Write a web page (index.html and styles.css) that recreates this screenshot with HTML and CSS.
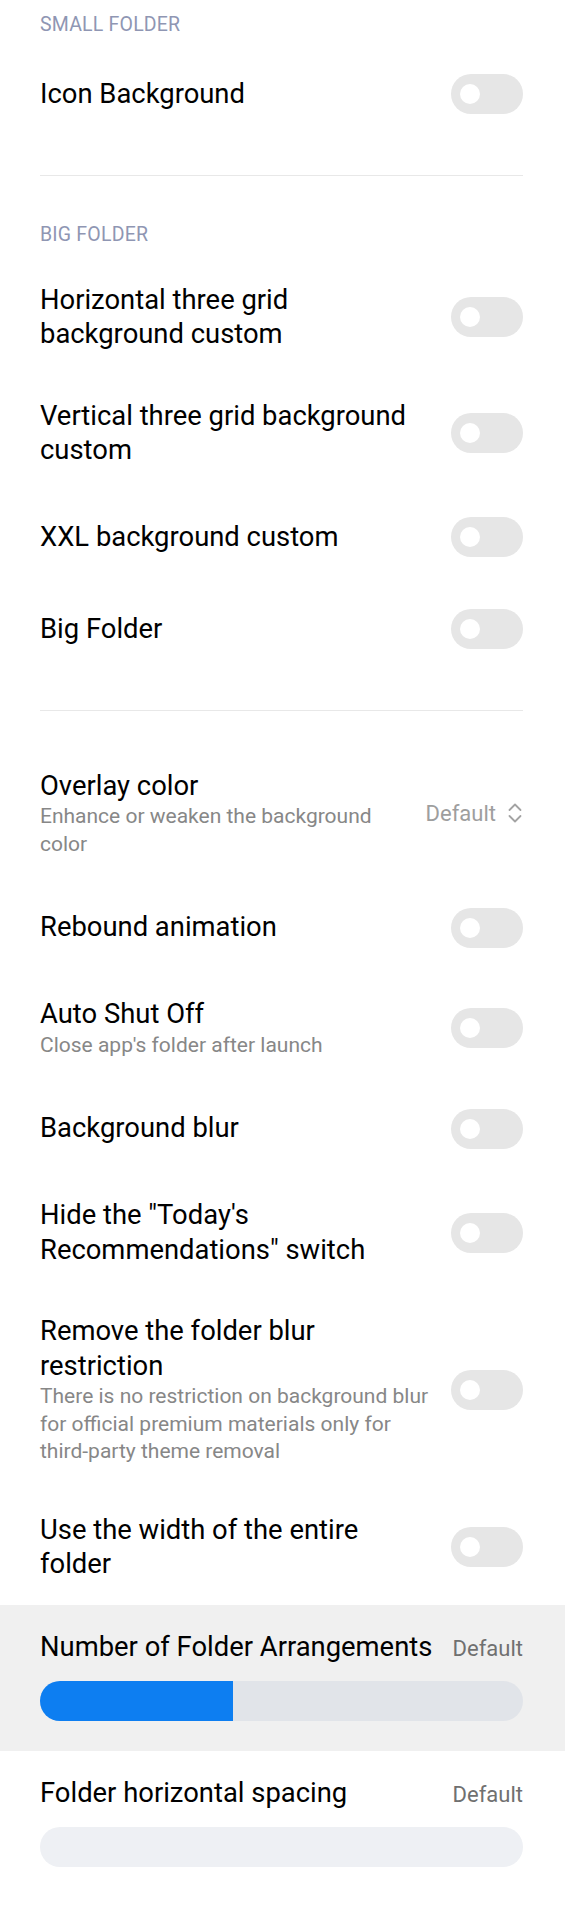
FILE: index.html
```html
<!DOCTYPE html>
<html lang="en">
<head>
   <meta charset="UTF-8">
   <meta name="viewport" content="width=device-width, initial-scale=1.0">
   <title>Folder settings</title>
   <link rel="stylesheet" href="styles.css">
</head>
<body>
   <div class="group">
       <div class="section-title first">SMALL FOLDER</div>
       <div class="row">
           <div class="text"><div class="title">Icon Background</div></div>
           <span class="switch"></span>
       </div>

       <div class="divider"></div>

       <div class="section-title">BIG FOLDER</div>
       <div class="row">
           <div class="text"><div class="title">Horizontal three grid background custom</div></div>
           <span class="switch"></span>
       </div>
       <div class="row">
           <div class="text"><div class="title">Vertical three grid background custom</div></div>
           <span class="switch"></span>
       </div>
       <div class="row">
           <div class="text"><div class="title">XXL background custom</div></div>
           <span class="switch"></span>
       </div>
       <div class="row">
           <div class="text"><div class="title">Big Folder</div></div>
           <span class="switch"></span>
       </div>

       <div class="divider"></div>

       <div class="row spaced">
           <div class="text">
               <div class="title">Overlay color</div>
               <div class="summary">Enhance or weaken the background color</div>
           </div>
           <div class="picker">
               <span>Default</span>
               <svg width="16" height="24" viewBox="0 0 16 24" fill="none" stroke="#a3a3a3" stroke-width="1.8" stroke-linecap="round" stroke-linejoin="round">
                   <path d="M2.5 9 L8 3.5 L13.5 9"/>
                   <path d="M2.5 15 L8 20.5 L13.5 15"/>
               </svg>
           </div>
       </div>
       <div class="row">
           <div class="text"><div class="title">Rebound animation</div></div>
           <span class="switch"></span>
       </div>
       <div class="row">
           <div class="text">
               <div class="title">Auto Shut Off</div>
               <div class="summary">Close app's folder after launch</div>
           </div>
           <span class="switch"></span>
       </div>
       <div class="row">
           <div class="text"><div class="title">Background blur</div></div>
           <span class="switch"></span>
       </div>
       <div class="row">
           <div class="text"><div class="title">Hide the "Today's Recommendations" switch</div></div>
           <span class="switch"></span>
       </div>
       <div class="row">
           <div class="text">
               <div class="title">Remove the folder blur restriction</div>
               <div class="summary">There is no restriction on background blur for official premium materials only for third-party theme removal</div>
           </div>
           <span class="switch"></span>
       </div>
       <div class="row">
           <div class="text"><div class="title">Use the width of the entire folder</div></div>
           <span class="switch"></span>
       </div>
   </div>

   <div class="slider pressed">
       <div class="slider-head">
           <span class="title">Number of Folder Arrangements</span>
           <span class="value">Default</span>
       </div>
       <div class="track"><div class="fill" style="width: 40%"></div></div>
   </div>

   <div class="slider">
       <div class="slider-head">
           <span class="title">Folder horizontal spacing</span>
           <span class="value">Default</span>
       </div>
       <div class="track light"></div>
   </div>
</body>
</html>
```

FILE: styles.css
```css
body {
	margin: 0;
	background: #fff;
	color: #000;
	font-family: Roboto, 'Noto Sans', sans-serif;
}
.group {
	padding: 0 42px 0 40px;
}
.section-title {
	font-size: 19.5px;
	letter-spacing: 0.2px;
	line-height: 26px;
	color: #8f96b3;
	margin: 46px 0 11px;
}
.section-title.first {
	margin-top: 12px;
	margin-bottom: 10px;
}
.divider {
	height: 1px;
	background: #e8e8e8;
	margin: 35px 0 34px;
}
.row {
	display: flex;
	align-items: center;
	gap: 16px;
	min-height: 92px;
	padding: 23.5px 0;
	box-sizing: border-box;
}
.row.spaced {
	margin-top: 33px;
}
.text {
	flex: 1;
	min-width: 0;
}
.title {
	max-width: 375px;
	font-size: 27.4px;
	line-height: 34.5px;
}
.summary {
	font-size: 21px;
	line-height: 27.5px;
	color: #878787;
}
.switch {
	flex-shrink: 0;
	display: flex;
	align-items: center;
	width: 72px;
	height: 40px;
	border-radius: 20px;
	background: #e6e6e6;
}
.switch::before {
	content: '';
	width: 20px;
	height: 20px;
	margin-left: 8.5px;
	border-radius: 50%;
	background: #fff;
}
.picker {
	display: flex;
	align-items: center;
	gap: 11px;
	flex-shrink: 0;
	margin-left: 8px;
	font-size: 22px;
	color: #9e9e9e;
}
.slider {
	padding: 25px 42px 30px 40px;
}
.slider.pressed {
	background: #f0f0f0;
}
.slider-head {
	display: flex;
	justify-content: space-between;
	align-items: baseline;
	margin-bottom: 16.5px;
}
.slider-head .title {
	max-width: none;
}
.value {
	font-size: 22px;
	color: #707070;
}
.track {
	height: 40px;
	border-radius: 20px;
	background: #e1e4e9;
	overflow: hidden;
}
.track.light {
	background: #eef0f4;
}
.fill {
	height: 100%;
	background: #0d7ef1;
}
```
